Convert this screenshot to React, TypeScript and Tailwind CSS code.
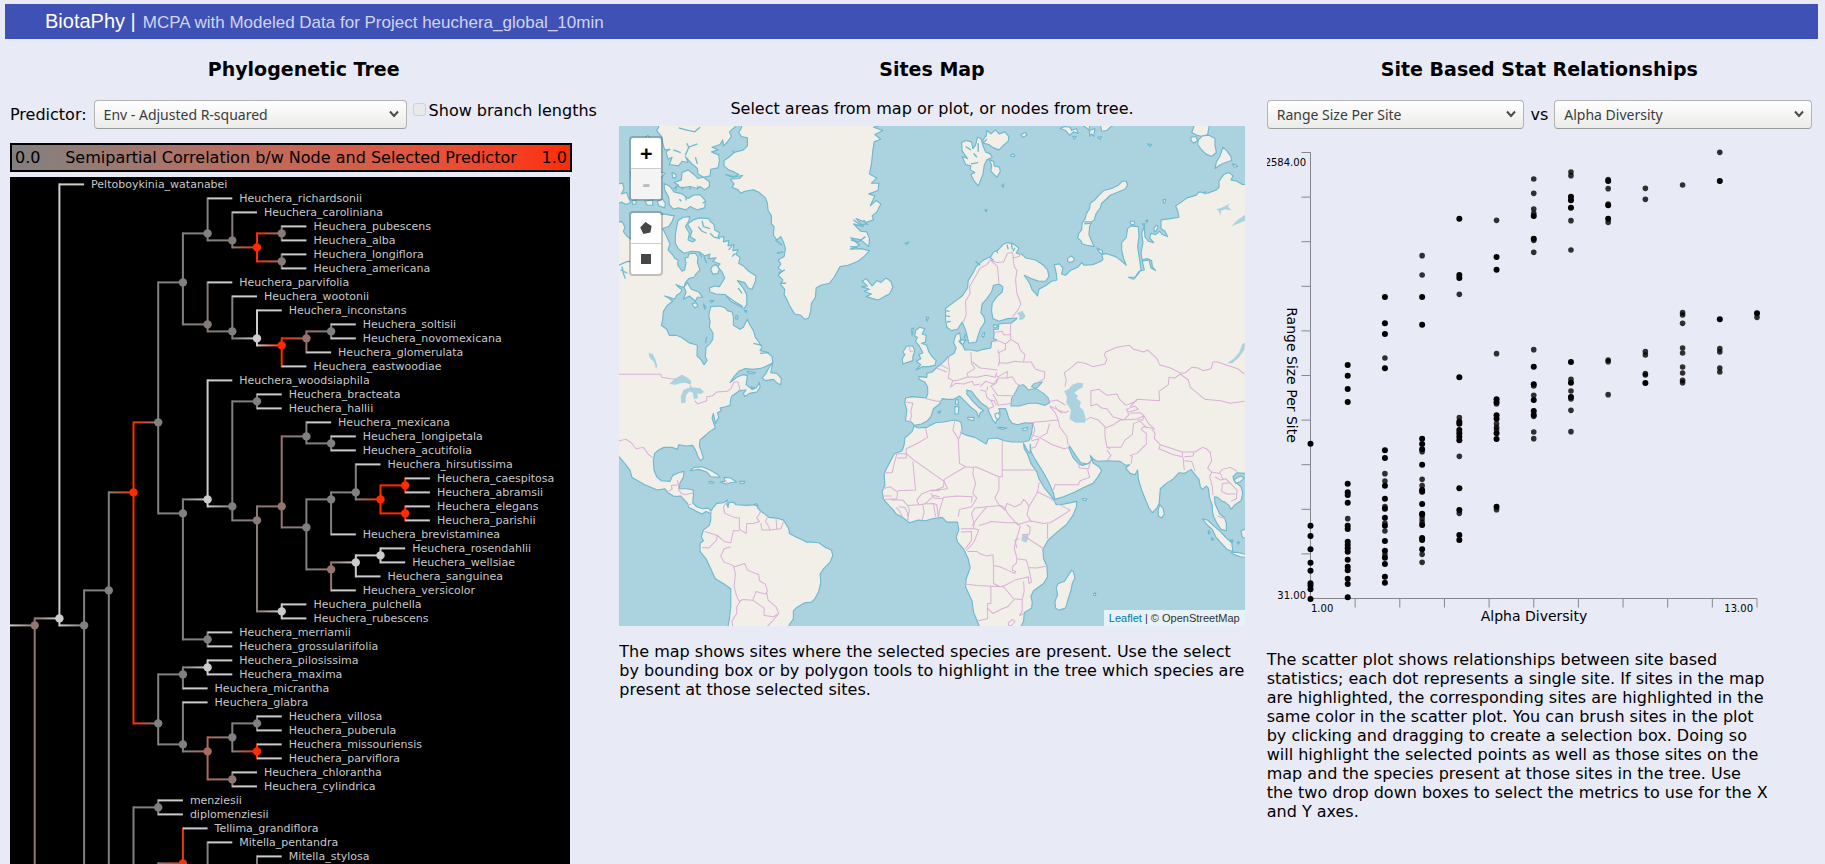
import React from "react";

/* ------------------------------------------------------------------ */
/* Phylogenetic tree                                                   */
/* ------------------------------------------------------------------ */

type Clade = { name?: string; color: string; kids: Clade[] };

const GRAY = "#808080";
const PALE = "#cccccc";
const RED = "#ff2b00";

const sp = (name: string): Clade => ({ name, color: PALE, kids: [] });
const h = (epithet: string): Clade => sp("Heuchera_" + epithet);
const n = (color: string, ...kids: Clade[]): Clade => ({ color, kids });
const tip: Clade = { color: PALE, kids: [] };

const cladeA = n(
  GRAY,
  n(
    GRAY,
    h("richardsonii"),
    n(
      "#857c7a",
      h("caroliniana"),
      n(RED, n("#857b79", h("pubescens"), h("alba")), n("#857b79", h("longiflora"), h("americana"))),
    ),
  ),
  n(
    "#857977",
    h("parvifolia"),
    n(
      GRAY,
      h("wootonii"),
      n(
        PALE,
        h("inconstans"),
        n(RED, n("#9a706a", n(GRAY, h("soltisii"), h("novomexicana")), h("glomerulata")), h("eastwoodiae")),
      ),
    ),
  ),
);

const cladeB = n(
  GRAY,
  n(
    PALE,
    h("woodsiaphila"),
    n(
      GRAY,
      n(GRAY, h("bracteata"), h("hallii")),
      n(
        "#8a7a77",
        n(
          "#967570",
          n(GRAY, h("mexicana"), n(GRAY, h("longipetala"), h("acutifolia"))),
          n(
            GRAY,
            n(
              GRAY,
              n(
                GRAY,
                h("hirsutissima"),
                n(RED, n(RED, h("caespitosa"), h("abramsii")), n(RED, h("elegans"), h("parishii"))),
              ),
              h("brevistaminea"),
            ),
            n("#94756f", n(PALE, n(PALE, h("rosendahlii"), h("wellsiae")), h("sanguinea")), h("versicolor")),
          ),
        ),
        n(PALE, h("pulchella"), h("rubescens")),
      ),
    ),
  ),
  n(GRAY, h("merriamii"), h("grossulariifolia")),
);

const cladeC = n(
  GRAY,
  n(GRAY, n(PALE, h("pilosissima"), h("maxima")), h("micrantha")),
  n(
    GRAY,
    h("glabra"),
    n(
      "#aa6a5e",
      n(GRAY, n(GRAY, h("villosa"), h("puberula")), n(RED, h("missouriensis"), h("parviflora"))),
      n("#8f7873", h("chlorantha"), h("cylindrica")),
    ),
  ),
);

const cladeD = n(
  GRAY,
  n(GRAY, sp("menziesii"), sp("diplomenziesii")),
  n(
    "#8a7a77",
    n(
      "#e6391a",
      sp("Tellima_grandiflora"),
      n(GRAY, sp("Mitella_pentandra"), n(GRAY, n("#857977", sp("Mitella_stylosa"), n(GRAY, tip, tip)), tip)),
    ),
    n(GRAY, n(GRAY, tip, tip), n(GRAY, n(GRAY, tip, tip), n(GRAY, tip, tip))),
  ),
);

const cladeE = n(GRAY, n(GRAY, tip, tip), n(GRAY, tip, n(GRAY, tip, tip)));

const root = n(
  "#8f7773",
  n(PALE, sp("Peltoboykinia_watanabei"), n(GRAY, n(GRAY, n(RED, n(GRAY, cladeA, cladeB), cladeC), cladeD), cladeE)),
  tip,
);

const STEP_X = 24.7;
const ROW = 14;
const TOP = 7.4;

type Placed = { clade: Clade; x: number; first: number; last: number; kids: Placed[] };

function place(clade: Clade, depth: number, counter: { row: number }): Placed {
  const x = depth * STEP_X;
  if (clade.kids.length === 0) {
    const row = counter.row++;
    return { clade, x, first: row, last: row, kids: [] };
  }
  const kids = clade.kids.map((kid) => place(kid, depth + 1, counter));
  return { clade, x, first: kids[0].first, last: kids[kids.length - 1].last, kids };
}

const yOf = (p: Placed) => TOP + ((p.first + p.last) / 2) * ROW;
const gradId = (a: string, b: string) => "edge-" + a.slice(1) + "-" + b.slice(1);

function PhyloTree() {
  const placed = place(root, 1, { row: 0 });
  const pairs = new Map<string, [string, string]>();
  const edges: React.ReactNode[] = [];
  const nodes: React.ReactNode[] = [];
  const labels: React.ReactNode[] = [];

  const fillFor = (a: string, b: string) => {
    if (a === b) return a;
    pairs.set(gradId(a, b), [a, b]);
    return `url(#${gradId(a, b)})`;
  };

  const walk = (p: Placed, key: string) => {
    const y = yOf(p);
    if (p.kids.length === 0) {
      if (p.clade.name) {
        labels.push(
          <text key={key} x={p.x + 7} y={y + 3.6}>
            {p.clade.name}
          </text>,
        );
      }
      return;
    }
    p.kids.forEach((kid, i) => {
      const ky = yOf(kid);
      const k = key + i;
      const fill = kid.kids.length ? fillFor(p.clade.color, kid.clade.color) : PALE;
      edges.push(
        <rect key={k + "v"} x={p.x - 1} y={Math.min(y, ky) - 1} width={2} height={Math.abs(ky - y) + 2} fill={p.clade.color} />,
        <rect key={k + "h"} x={p.x} y={ky - 1} width={STEP_X} height={2} fill={fill} />,
      );
      walk(kid, k);
    });
    nodes.push(<circle key={key} cx={p.x} cy={y} r={4.2} fill={p.clade.color} />);
  };

  edges.push(
    <rect key="stem" x={0} y={yOf(placed) - 1} width={STEP_X} height={2} fill={fillFor(PALE, placed.clade.color)} />,
  );
  walk(placed, "n");

  return (
    <svg width="560" height="904" role="img" aria-label="Phylogenetic tree" className="block">
      <defs>
        {[...pairs].map(([id, [a, b]]) => (
          <linearGradient key={id} id={id}>
            <stop offset="0" stopColor={a} />
            <stop offset="1" stopColor={b} />
          </linearGradient>
        ))}
      </defs>
      {edges}
      {nodes}
      <g fill="#c8c8c8" className="text-[11px]">
        {labels}
      </g>
    </svg>
  );
}

/* ------------------------------------------------------------------ */
/* World map, drawn in thirds of a pixel                               */
/* ------------------------------------------------------------------ */

const AMERICAS =
  "M10,548 36,545 45,562 40,575 52,590 66,600 80,585 90,560 120,530 160,522 193,528 186,545 176,560 158,566 170,590 180,612 174,630 188,645 194,655 204,660 203,675 216,694 224,690 228,668 224,655 234,652 236,642 256,640 264,652 262,668 270,690 258,702 252,712 236,716 226,728 222,742 212,740 198,734 208,744 216,748 212,758 200,766 194,778 178,772 164,768 176,774 188,784 170,798 160,815 158,838 154,856 170,868 178,886 198,886 214,892 236,908 262,916 261,948 272,958 282,974 291,962 286,950 288,922 300,910 308,898 309,880 298,862 300,845 296,826 302,800 330,798 346,804 352,812 366,816 370,830 370,856 390,868 400,862 408,845 412,838 418,852 430,872 436,892 446,906 456,922 450,932 470,936 486,950 488,968 470,978 456,984 430,988 404,986 386,994 372,1010 360,1028 380,1012 398,1004 412,1006 410,1022 408,1034 426,1048 438,1044 448,1028 450,1042 440,1056 418,1060 404,1070 400,1060 408,1050 388,1052 366,1068 362,1076 360,1096 346,1100 330,1104 334,1112 322,1118 326,1132 316,1150 310,1120 306,1135 316,1164 300,1174 284,1188 270,1200 268,1218 276,1240 280,1254 272,1262 264,1250 258,1234 248,1216 230,1218 206,1214 202,1228 186,1222 162,1222 146,1230 134,1240 130,1262 132,1290 140,1310 154,1322 180,1324 188,1306 206,1298 222,1294 220,1312 210,1328 208,1346 230,1346 250,1350 250,1368 248,1388 260,1400 278,1406 294,1404 304,1412 308,1404 320,1390 340,1388 352,1380 350,1392 354,1402 356,1388 370,1386 378,1394 410,1396 440,1394 442,1402 450,1412 462,1420 476,1432 500,1434 520,1440 528,1452 536,1466 538,1480 556,1490 582,1502 588,1506 604,1506 626,1508 646,1522 664,1530 668,1546 660,1566 640,1586 630,1602 632,1626 626,1654 614,1676 604,1686 584,1688 560,1702 550,1712 550,1736 540,1750 530,1770 352,1770 358,1736 362,1700 362,1646 340,1630 316,1616 302,1586 288,1556 270,1534 270,1510 280,1502 274,1490 280,1470 298,1456 302,1440 302,1420 288,1414 276,1422 260,1414 250,1408 236,1402 232,1390 214,1370 190,1368 174,1358 164,1346 142,1350 104,1334 66,1312 60,1290 44,1270 27,1250 10,1240Z";

const OLD_WORLD =
  "M1920,1300 1902,1300 1880,1298 1868,1310 1872,1324 1892,1340 1897,1360 1892,1382 1874,1394 1862,1408 1856,1396 1844,1386 1836,1384 1822,1372 1812,1370 1814,1390 1820,1404 1828,1422 1842,1432 1848,1450 1848,1472 1832,1468 1820,1450 1810,1430 1806,1414 1806,1396 1798,1374 1794,1344 1788,1338 1776,1348 1770,1340 1766,1318 1748,1296 1742,1288 1722,1300 1706,1298 1690,1316 1668,1330 1650,1346 1648,1372 1646,1392 1640,1404 1626,1418 1616,1404 1606,1380 1594,1350 1584,1316 1582,1290 1574,1304 1560,1300 1546,1284 1558,1274 1546,1276 1530,1264 1490,1262 1462,1264 1448,1256 1440,1246 1444,1260 1432,1272 1412,1268 1396,1246 1378,1218 1376,1224 1388,1252 1404,1270 1416,1276 1436,1270 1446,1256 1448,1268 1466,1280 1474,1292 1462,1312 1448,1330 1420,1342 1394,1356 1360,1370 1334,1378 1330,1360 1316,1328 1302,1302 1286,1276 1270,1250 1262,1234 1260,1212 1260,1238 1254,1236 1240,1210 1242,1226 1252,1242 1262,1270 1280,1296 1286,1316 1304,1346 1318,1362 1330,1378 1338,1394 1360,1392 1400,1384 1398,1402 1388,1426 1368,1454 1336,1480 1312,1502 1298,1528 1300,1556 1310,1578 1312,1610 1300,1630 1270,1652 1262,1668 1266,1686 1264,1704 1242,1718 1240,1744 1226,1770 1112,1770 1100,1740 1090,1716 1086,1684 1066,1640 1068,1616 1080,1584 1074,1556 1060,1526 1042,1506 1038,1490 1046,1470 1042,1446 1010,1446 996,1432 966,1436 946,1442 924,1440 898,1448 880,1434 858,1422 850,1410 838,1398 820,1378 816,1354 824,1336 822,1300 830,1284 852,1242 876,1232 882,1214 884,1194 906,1174 912,1158 924,1164 950,1162 976,1148 1000,1146 1034,1140 1052,1146 1056,1168 1052,1178 1070,1186 1094,1192 1128,1212 1134,1196 1160,1194 1182,1202 1206,1206 1236,1206 1256,1202 1264,1180 1268,1150 1244,1148 1222,1154 1206,1150 1196,1136 1190,1116 1186,1106 1166,1106 1170,1122 1162,1136 1156,1150 1148,1140 1138,1120 1132,1102 1112,1088 1096,1070 1084,1054 1070,1050 1070,1062 1088,1084 1104,1100 1120,1112 1110,1118 1106,1132 1098,1114 1080,1100 1062,1082 1048,1068 1030,1078 1012,1078 996,1076 988,1092 970,1106 962,1130 952,1142 934,1152 912,1156 904,1146 886,1142 890,1110 884,1090 886,1074 906,1070 948,1074 953,1060 952,1040 944,1026 926,1018 926,1010 950,1012 950,1000 966,996 980,982 986,978 1004,962 1014,950 1032,940 1038,924 1030,908 1036,886 1048,878 1052,898 1046,904 1058,916 1064,930 1084,930 1100,934 1120,928 1142,924 1144,906 1160,900 1150,896 1152,880 1150,868 1164,868 1166,852 1186,850 1202,850 1218,838 1220,834 1192,836 1166,844 1148,836 1144,812 1146,790 1160,770 1176,756 1178,740 1166,732 1150,736 1144,756 1130,776 1116,792 1112,818 1122,832 1124,846 1110,868 1104,886 1098,906 1076,910 1072,894 1066,870 1056,846 1042,868 1024,872 1010,862 1006,838 1006,806 1018,796 1046,776 1058,766 1072,744 1074,722 1088,700 1098,680 1120,660 1142,650 1150,636 1164,630 1178,614 1192,608 1210,612 1226,624 1218,640 1236,644 1246,654 1276,660 1300,676 1312,690 1316,710 1306,724 1286,724 1262,716 1242,706 1258,730 1266,750 1282,768 1286,748 1304,738 1324,724 1340,720 1338,700 1332,674 1348,672 1358,684 1354,702 1366,706 1380,692 1402,682 1414,668 1422,676 1448,674 1472,664 1478,658 1474,642 1492,642 1516,650 1532,662 1548,676 1540,656 1534,630 1534,608 1548,592 1552,566 1562,558 1584,560 1586,590 1582,620 1588,660 1592,690 1582,704 1570,718 1554,712 1574,712 1586,694 1602,690 1596,664 1616,660 1622,684 1636,692 1626,680 1624,662 1610,656 1596,660 1592,640 1598,608 1594,580 1602,560 1604,590 1614,604 1630,608 1618,594 1622,580 1636,584 1648,574 1656,584 1672,590 1664,574 1652,566 1652,540 1680,536 1706,532 1702,512 1696,498 1714,486 1730,474 1758,466 1766,456 1792,460 1818,450 1826,442 1826,424 1840,404 1856,398 1868,408 1862,420 1880,424 1896,434 1920,434Z";

const ISLANDS = [
  // Greenland
  "M402,240 392,268 386,278 394,290 412,294 412,318 400,330 372,338 356,352 342,362 342,378 356,390 372,396 386,404 372,410 346,404 368,412 398,406 388,416 360,418 372,432 366,442 384,450 392,460 404,454 430,450 448,458 466,474 472,490 474,512 484,528 484,552 492,560 490,586 500,600 512,590 520,606 526,626 522,650 504,660 512,672 504,684 516,694 504,706 518,720 512,734 524,748 522,764 530,778 540,800 554,822 572,826 584,838 596,834 602,812 604,790 616,772 618,744 632,736 658,730 672,712 690,680 714,676 744,664 764,648 778,632 752,626 720,628 748,616 722,594 752,600 776,620 778,596 770,576 752,574 730,552 760,560 738,536 766,548 790,540 786,528 800,516 812,492 798,482 780,498 794,468 776,462 804,452 806,430 784,430 800,414 778,402 784,372 788,334 792,306 812,298 794,284 818,272 790,262 834,250 836,240Z",
  // Ellesmere
  "M142,240 146,262 140,272 156,292 158,310 164,330 180,328 168,336 174,358 186,352 178,374 206,378 216,364 234,368 226,350 246,372 262,386 264,402 280,412 300,408 302,388 324,384 328,362 326,345 304,336 324,330 306,322 330,314 338,300 340,318 352,306 364,290 358,276 374,262 388,240Z",
  // Devon and neighbours
  "M190,446 206,436 192,428 214,420 216,398 234,390 252,404 264,416 280,412 298,426 298,440 284,450 270,440 262,446 240,440 214,444 204,438Z",
  "M162,430 180,440 192,456 216,462 234,476 250,466 270,464 286,482 284,504 262,510 240,500 228,510 204,504 190,508 178,494 176,472 164,450Z",
  "M186,398 198,404 198,414 188,414Z",
  "M104,484 128,480 128,496 112,496Z",
  "M142,484 158,478 166,490 164,504 146,498Z",
  "M20,432 38,430 42,446 34,462 50,458 54,470 62,488 48,494 34,486 20,496Z",
  "M66,484 78,480 78,492 68,494Z",
  "M62,396 76,392 110,400 150,396 166,400 150,416 130,470 90,468 64,420Z",
  "M108,292 114,286 120,296 112,304Z",
  // Baffin
  "M200,560 204,542 220,532 240,530 236,544 226,560 238,580 234,600 248,606 256,600 240,590 246,574 232,552 250,540 268,534 296,536 302,546 312,554 314,570 328,578 324,592 342,590 340,606 356,602 354,618 372,614 368,632 384,630 378,644 390,652 386,670 402,680 416,694 438,708 436,724 426,748 414,744 404,728 382,722 398,742 410,764 410,794 402,806 384,796 362,784 346,764 318,762 300,756 298,744 314,738 328,740 344,714 336,696 322,680 330,672 308,664 318,654 296,656 300,642 284,648 268,636 244,634 222,640 206,628 196,610 196,586Z",
  "M306,680 318,674 328,688 322,702 308,702 302,690Z",
  "M232,728 244,748 266,756 278,772 262,772 256,784 238,768 220,778 228,756 222,742Z",
  "M246,792 258,788 264,798 254,804Z",
  "M280,792 288,802 284,808Z",
  "M300,782 312,782 304,788Z",
  "M402,812 410,812 408,818Z",
  // Newfoundland
  "M488,968 476,984 468,1000 456,1014 466,1022 490,1018 502,1030 512,1034 514,1016 500,1000 482,998Z",
  "M412,994 436,998 430,1002 416,1000Z",
  "M424,1040 434,1044 426,1048Z",
  // Caribbean
  "M240,1292 252,1282 276,1280 300,1290 324,1304 330,1312 302,1310 290,1296 266,1288Z",
  "M330,1326 344,1324 342,1312 362,1314 380,1326 362,1328 348,1332Z",
  "M296,1326 304,1324 312,1328 302,1330Z",
  "M388,1324 404,1324 402,1330 390,1330Z",
  "M432,1394 440,1390 444,1398Z",
  // Iceland
  "M754,740 772,738 756,724 768,716 778,728 786,738 800,722 812,728 828,714 842,724 848,742 838,762 822,770 804,780 788,776 768,770 784,762 762,754 778,748Z",
  "M884,610 896,606 890,614Z",
  "M948,832 956,832 950,844Z",
  // Britain and Ireland
  "M916,872 928,862 944,866 936,882 948,886 946,906 934,910 950,916 956,936 966,950 978,962 974,976 956,980 936,980 918,990 932,974 918,964 932,956 926,944 938,938 926,916 916,904 922,892 914,890Z",
  "M904,868 910,864 908,878 906,888Z",
  "M890,918 908,918 914,932 908,950 908,962 890,968 878,972 876,956 884,944 878,936Z",
  // Svalbard
  "M1054,308 1068,302 1084,306 1088,326 1096,316 1102,292 1112,296 1118,316 1126,336 1140,342 1146,352 1130,360 1122,376 1118,404 1110,424 1104,438 1092,424 1082,404 1094,398 1080,390 1082,378 1066,374 1056,350 1072,356 1056,334Z",
  "M1118,300 1128,288 1130,272 1142,282 1156,270 1166,282 1184,276 1196,290 1194,304 1176,320 1166,330 1150,324 1136,314 1120,310Z",
  "M1138,360 1150,364 1152,378 1168,382 1170,396 1160,412 1152,404 1142,394 1144,376Z",
  "M1232,284 1246,278 1250,286 1238,292Z",
  "M1200,346 1210,342 1214,350 1204,350Z",
  "M1174,438 1180,432 1180,442Z",
  "M1124,510 1130,510 1128,516Z",
  // Franz Josef Land
  "M1350,266 1362,260 1380,262 1384,272 1398,266 1404,280 1390,276 1378,286 1366,272Z",
  "M1410,252 1440,252 1436,270 1426,262Z",
  "M1438,272 1454,266 1450,290 1444,282 1438,290Z",
  "M1470,252 1516,252 1500,262 1490,272 1474,274Z",
  "M1388,290 1398,290 1392,298Z",
  "M1462,292 1474,290 1470,298Z",
  "M1612,312 1624,314 1620,320Z",
  // Novaya Zemlya
  "M1536,424 1548,424 1552,436 1544,448 1520,458 1500,466 1488,478 1474,490 1470,504 1458,520 1452,540 1444,546 1438,560 1436,584 1444,604 1452,620 1430,616 1416,612 1412,602 1402,594 1406,580 1414,570 1416,548 1424,538 1428,522 1438,506 1440,490 1454,480 1464,468 1480,452 1504,446 1524,436Z",
  "M1424,546 1442,546 1442,550 1424,552Z",
  // Arctic Russian islands
  "M1756,240 1750,262 1744,278 1760,286 1776,290 1792,284 1796,262 1794,240Z",
  "M1742,292 1756,290 1762,302 1750,310 1742,302Z",
  "M1764,300 1776,288 1796,286 1814,296 1814,316 1818,338 1804,350 1786,342 1772,328 1762,314Z",
  "M1838,322 1850,334 1862,350 1864,362 1846,368 1832,374 1814,386 1818,366 1828,350Z",
  "M1866,372 1874,374 1882,380 1872,382Z",
  "M1778,458 1786,456 1784,462Z",
  "M1372,656 1382,648 1392,654 1390,664 1378,668 1372,664Z",
  "M1460,624 1476,632 1478,644 1468,638Z",
  "M1560,544 1572,544 1572,556 1560,552Z",
  "M1606,542 1612,540 1610,548Z",
  "M1596,552 1604,552 1602,560Z",
  "M1630,566 1638,556 1644,560 1638,572 1634,576Z",
  "M1658,480 1666,478 1664,490 1660,490Z",
  // Danish and Baltic islands
  "M1054,898 1064,904 1058,914 1050,906Z",
  "M1118,880 1124,878 1120,892 1114,888Z",
  "M1150,854 1162,856 1158,864 1150,862Z",
  // Mediterranean
  "M1072,1132 1092,1132 1090,1142 1074,1138Z",
  "M1034,1100 1046,1100 1044,1122 1034,1122Z",
  "M1036,1080 1044,1078 1044,1094 1036,1092Z",
  "M982,1116 992,1112 988,1120Z",
  "M1162,1162 1176,1162 1190,1164 1176,1168Z",
  "M1236,1166 1252,1162 1250,1170 1240,1172Z",
  "M1154,1122 1164,1118 1170,1128 1164,1140 1156,1132Z",
  // Madagascar and Indian Ocean
  "M1384,1590 1390,1596 1394,1614 1386,1630 1382,1652 1374,1676 1366,1704 1346,1710 1336,1704 1334,1684 1342,1664 1338,1642 1344,1630 1362,1624 1374,1606Z",
  "M1416,1376 1430,1376 1426,1382 1418,1380Z",
  "M1450,1660 1456,1658 1456,1666 1450,1666Z",
  "M1648,1394 1658,1404 1662,1422 1654,1434 1644,1428 1644,1408Z",
  "M1776,1436 1792,1440 1808,1456 1830,1474 1846,1492 1864,1508 1868,1534 1850,1528 1832,1508 1816,1490 1806,1468 1790,1454Z",
  "M1862,1538 1880,1536 1910,1544 1910,1552 1890,1550 1868,1542Z",
  "M1892,1472 1910,1466 1910,1496 1896,1492Z",
  "M1872,1318 1890,1308 1902,1314 1888,1326 1876,1330Z",
  "M1794,1472 1800,1478 1794,1482Z",
  "M1804,1492 1810,1498 1804,1500Z",
  "M1860,1500 1868,1500 1866,1508Z",
  "M1880,1506 1888,1506 1884,1512Z",
];

const SEAS = [
  // Black Sea with Azov
  "M1202,1098 1204,1076 1216,1056 1226,1036 1240,1034 1248,1042 1254,1050 1262,1048 1278,1046 1300,1060 1314,1074 1318,1088 1304,1096 1280,1090 1256,1090 1228,1098Z",
  "M1264,1040 1272,1030 1296,1026 1284,1040 1276,1046Z",
  "M378,826 384,828 382,838 376,836Z",
];

const LAKES = [
  "M1362,1054 1376,1046 1386,1034 1402,1028 1418,1030 1418,1042 1406,1048 1392,1058 1404,1068 1398,1074 1412,1086 1408,1100 1420,1112 1426,1134 1424,1148 1396,1148 1378,1138 1382,1110 1368,1088 1370,1072Z",
  "M178,1032 194,1016 216,1004 234,1014 244,1024 242,1034 226,1028 210,1030 196,1034Z",
  "M214,1090 212,1070 220,1050 240,1042 270,1044 282,1056 272,1062 262,1060 264,1074 252,1078 248,1058 238,1054 228,1066 226,1088Z",
  "M116,938 128,942 136,958 142,978 138,986 132,966 118,952Z",
  "M1220,820 1236,812 1246,828 1240,838 1226,840 1228,828Z",
  "M1234,1490 1254,1482 1254,1494 1248,1508 1234,1502Z",
  "M1896,912 1904,908 1902,930 1884,954 1866,970 1850,970 1868,958 1886,938Z",
  "M1818,508 1832,504 1842,500 1860,490 1852,500 1864,512 1846,508 1832,512 1830,530 1826,514Z",
  "M1864,558 1880,542 1910,520 1910,540 1886,550Z",
];

const FJORDS =
  "M190,330 212,338 M226,346 236,322 262,312 M270,262 254,276 228,270 206,264 M238,326 230,310 M256,352 262,372 M198,440 198,452 M216,440 218,450 M240,440 240,450 M262,438 264,448 M228,470 228,482 M208,478 214,484 M286,484 278,490 M265,560 276,574 290,580 M276,542 280,560 300,566 M300,580 312,592 330,596 M366,618 356,630 M376,640 366,650 M384,744 396,760 M350,768 372,784 398,800 M496,600 516,616 M500,640 520,636 M506,700 524,690 M510,730 528,730 M730,540 752,556 768,552 M722,600 744,606 766,590 M720,620 742,622 M760,540 774,556 M368,332 372,340 M282,650 290,670 M268,640 276,652 M430,910 456,916 M450,940 476,938 M32,690 52,700 M27,676 48,666 60,664 M36,680 40,700 46,716 M1066,320 1082,330 M1104,310 1104,336 M1082,372 1104,368 M1090,340 1100,352 M1120,308 1130,298 M1190,614 1194,628 M1204,612 1206,628 M1214,624 1208,634 M1160,632 1162,640 M1138,652 1150,662 M1096,664 1110,676 M1008,812 1018,814 M1008,828 1020,830 M1010,846 1022,844 M1070,880 1062,890 1068,904 M286,910 290,890";

const BORDERS =
  "M27,1003 152,1003 156,1012 182,1016 200,1018 M240,1036 246,1046 M254,1082 262,1092 290,1082 290,1070 306,1068 320,1056 352,1054 362,1046 372,1026 384,1026 390,1050 M27,1202 48,1198 64,1208 78,1226 100,1222 116,1244 132,1256 M176,1354 186,1348 184,1336 206,1334 202,1320 M206,1334 206,1350 214,1360 226,1364 250,1358 M214,1366 204,1368 M230,1396 244,1392 M298,1412 306,1420 M352,1384 340,1400 344,1420 372,1432 388,1434 388,1468 408,1480 410,1450 430,1450 448,1444 440,1434 452,1414 M472,1432 466,1444 474,1456 480,1470 512,1466 520,1446 M498,1436 500,1466 M452,1450 456,1470 480,1470 M284,1474 308,1482 322,1486 342,1504 362,1508 370,1472 388,1472 M322,1486 318,1502 296,1524 276,1522 M362,1520 342,1526 332,1548 342,1566 360,1572 374,1580 404,1570 412,1590 446,1604 448,1622 466,1632 472,1652 466,1662 438,1654 428,1680 398,1678 388,1684 380,1668 372,1640 376,1600 370,1578 M428,1680 462,1704 462,1726 490,1730 506,1720 498,1700 474,1680 470,1658 M390,1684 380,1700 380,1720 366,1742 368,1770 M504,1722 486,1744 472,1758 M346,1320 352,1332 " +
  "M888,1086 908,1090 902,1114 904,1128 898,1146 M948,1076 980,1084 996,1084 M898,920 900,934 910,934 " +
  "M1060,846 1068,824 1066,784 1080,760 1078,740 1100,702 1110,684 1130,674 1140,660 1162,680 1166,728 M1140,660 1160,668 1180,666 1192,640 1206,638 1210,654 1226,650 1232,642 M1208,652 1212,680 1220,692 1216,720 1220,760 1232,792 1222,812 1206,832 M1202,850 1200,874 1202,898 1224,912 1230,930 1244,944 1240,966 1264,966 1266,974 M1148,878 1176,874 1180,884 1200,884 M1146,904 1164,902 1186,912 1202,898 M1186,912 1186,928 1166,938 1168,966 1164,978 M1164,930 1164,940 M1164,968 1192,970 1212,964 1240,966 M1082,936 1084,970 1094,986 M1020,940 1014,960 1018,992 1014,1014 1028,1022 1020,1042 M978,984 1010,996 M990,974 1014,986 M1086,966 1110,984 1130,986 1162,990 M1094,986 1070,1000 1074,1010 1046,1020 1028,1022 M1074,1010 1100,1012 1128,1006 1156,1012 1160,996 M1020,1042 1036,1030 1060,1032 1086,1024 1092,1036 1110,1032 M1110,1040 1126,1024 1150,1032 1164,1014 1190,1014 1206,1010 M1164,1014 1158,1030 1142,1038 1152,1052 1162,1066 1220,1068 M1206,1010 1218,1030 1230,1038 M1110,1050 1126,1054 1130,1072 1144,1084 1150,1100 1134,1106 M1130,1052 1132,1040 M1148,1062 1160,1084 1164,1096 1192,1092 1206,1088 M1140,1080 1152,1082 1158,1096 M1154,1006 1164,1010 1192,994 1190,1014 M1266,972 1276,988 1304,996 1302,1016 1282,1028 " +
  "M1364,1040 1368,1022 1362,998 1384,982 1402,966 1424,970 1448,980 1484,972 1490,958 1482,946 1486,936 1520,922 1558,916 1570,928 1600,936 1612,930 1640,956 1648,974 1680,984 1712,1000 1726,998 1744,982 1764,984 1778,992 1802,986 1808,966 1822,966 1850,976 1882,986 1902,1002 M1710,1002 1694,1014 1676,1012 1674,1034 1646,1054 1648,1082 1580,1078 1560,1100 M1710,1002 1734,1020 1740,1042 1784,1078 1830,1082 1860,1090 1902,1084 M1442,1098 1442,1052 1466,1048 1490,1066 1520,1062 1528,1078 1548,1096 1580,1082 M1442,1098 1460,1092 1474,1104 1490,1106 1508,1130 1540,1140 1556,1124 1548,1106 M1548,1108 1574,1098 1584,1108 1564,1114 1552,1116 M1560,1120 1590,1118 1600,1126 1598,1140 1580,1140 M1424,1142 1440,1132 1464,1140 1484,1160 1484,1190 1490,1222 1500,1226 M1484,1164 1510,1154 1530,1140 1576,1138 1600,1128 M1490,1222 1532,1222 1544,1200 1566,1184 1570,1150 1590,1144 1610,1164 M1490,1230 1502,1246 1490,1262 M1562,1272 1566,1250 1560,1246 1580,1240 1608,1212 1608,1180 1592,1168 1600,1160 1624,1164 1634,1180 1632,1196 1650,1214 1716,1236 1716,1250 1690,1244 1646,1226 1650,1214 M1600,1126 1614,1150 1634,1168 M1716,1236 1754,1236 1776,1222 1788,1226 1800,1238 1804,1262 1792,1284 1804,1296 1826,1300 1836,1288 1860,1282 1880,1294 M1722,1250 1748,1248 1750,1238 M1718,1252 1722,1290 M1722,1262 1744,1264 1750,1280 1754,1294 M1804,1296 1798,1310 1806,1340 1808,1366 M1814,1310 1830,1320 1846,1316 1858,1328 1836,1330 1834,1354 1850,1362 1876,1362 M1858,1328 1880,1350 1878,1376 1862,1384 M1830,1300 1838,1318 M1822,1428 1844,1436 " +
  "M1258,1148 1280,1146 1344,1140 1336,1120 1318,1098 M1344,1140 1348,1160 1370,1190 1374,1216 M1318,1098 1340,1108 1364,1118 1376,1112 M1302,1076 1324,1084 1340,1080 1360,1092 1366,1096 M1334,1098 1342,1110 1356,1120 M1318,1150 1310,1180 1288,1192 1270,1186 M1288,1192 1326,1214 1362,1226 1376,1222 M1264,1202 1286,1196 1276,1220 1260,1226 M1268,1150 1274,1170 1262,1200 M1404,1268 1408,1284 1434,1286 1442,1264 M1432,1288 1438,1312 1410,1322 1404,1334 1360,1334 1334,1334 1330,1350 " +
  "M946,1164 952,1192 918,1212 888,1226 888,1240 860,1242 850,1280 846,1298 822,1298 M862,1254 888,1254 888,1240 908,1258 1002,1324 1012,1346 964,1352 M908,1264 916,1350 862,1352 M818,1346 840,1340 862,1356 860,1376 820,1378 M820,1368 844,1368 M844,1380 878,1380 892,1396 926,1394 920,1380 934,1362 964,1350 988,1352 M858,1402 866,1410 878,1432 M866,1400 884,1402 892,1418 894,1440 M892,1396 898,1410 892,1440 M938,1394 942,1416 936,1440 M938,1392 970,1390 976,1430 M970,1390 980,1394 984,1432 M926,1394 944,1392 972,1366 988,1370 " +
  "M1034,1142 1028,1170 1044,1196 1048,1270 1066,1280 1090,1282 1088,1302 1096,1330 1088,1360 1100,1374 1084,1400 1048,1408 1044,1430 M1066,1280 1002,1318 1000,1340 968,1354 M1056,1170 1046,1196 M1176,1202 1176,1310 1166,1310 1166,1350 1154,1374 1168,1396 M1176,1290 1280,1290 M1166,1310 1096,1280 1090,1282 M998,1372 1040,1368 1086,1370 1084,1386 M1000,1372 988,1410 986,1430 M962,1360 972,1374 1000,1376 M1052,1466 1090,1466 1092,1452 1084,1420 1094,1404 1130,1400 1170,1396 1180,1400 1194,1422 1222,1454 1260,1442 1300,1450 1320,1448 1350,1430 1380,1410 1340,1390 1320,1374 1282,1356 1286,1330 1302,1322 M1168,1396 1184,1410 1190,1390 1214,1400 1232,1392 1240,1378 1250,1388 1256,1400 1282,1356 M1256,1400 1250,1424 1264,1446 M1312,1496 1312,1452 M1250,1454 1260,1462 1258,1482 1236,1484 1300,1526 M1130,1400 1104,1430 1086,1456 M1052,1476 1084,1474 1084,1500 1066,1526 M1092,1466 1106,1470 1090,1508 1068,1532 M1106,1456 1128,1450 1142,1444 1192,1448 1220,1448 1230,1460 1218,1500 1212,1524 1220,1554 1218,1570 1208,1578 1206,1590 1216,1594 1214,1600 1192,1590 1168,1580 1150,1576 1148,1544 1130,1548 1108,1540 1100,1534 1072,1534 M1220,1524 1214,1500 1226,1496 M1220,1556 1248,1560 1256,1586 1264,1626 1256,1630 1254,1610 M1254,1582 1280,1584 1310,1578 M1150,1578 1150,1630 1170,1640 1184,1636 1214,1620 1256,1610 M1064,1632 1100,1636 1180,1640 1210,1676 1236,1678 1242,1652 1240,1624 M1142,1640 1142,1690 1132,1690 1132,1736 1104,1742 M1132,1704 1148,1720 1176,1706 1192,1700 1212,1678 M1236,1678 1236,1712 1228,1726 1242,1720 M1194,1748 1206,1738 1214,1744 1204,1756 1196,1758Z";

function WorldMap() {
  return (
    <svg
      viewBox="27 258 1875 1500"
      preserveAspectRatio="xMidYMid slice"
      className="block h-full w-full"
      role="img"
      aria-label="World map"
    >
      <g fill="#f2efe9" stroke="#6fb8cd" strokeWidth="3.4" strokeLinejoin="round">
        <path d={AMERICAS} />
        <path d={OLD_WORLD} />
        {ISLANDS.map((d) => (
          <path key={d} d={d} />
        ))}
      </g>
      <g fill="#aad3df" stroke="#6fb8cd" strokeWidth="3">
        {SEAS.map((d) => (
          <path key={d} d={d} />
        ))}
      </g>
      <path d={FJORDS} fill="none" stroke="#6fb8cd" strokeWidth="4" />
      <g fill="#aad3df">
        {LAKES.map((d) => (
          <path key={d} d={d} />
        ))}
      </g>
      <path d={BORDERS} fill="none" stroke="#d9b0d6" strokeWidth="3" strokeLinejoin="round" />
    </svg>
  );
}

/* ------------------------------------------------------------------ */
/* Scatter plot                                                        */
/* ------------------------------------------------------------------ */

/* One entry per alpha diversity value; heights in thirds of a pixel. */
const COLUMNS: { dense: number[]; sparse: number[] }[] = [
  { dense: [1331, 1577, 1608, 1648, 1688, 1712, 1750, 1757, 1768, 1797], sparse: [] },
  {
    dense: [1095, 1127, 1167, 1206, 1451, 1477, 1485, 1508, 1577, 1587, 1625, 1635, 1645, 1655, 1679, 1700, 1711, 1736, 1752, 1792],
    sparse: [1556],
  },
  {
    dense: [891, 970, 1002, 1105, 1351, 1374, 1457, 1496, 1526, 1553, 1577, 1623, 1652, 1673, 1692, 1730, 1748],
    sparse: [1074, 1421, 1443, 1520, 1569, 1593, 1664],
  },
  {
    dense: [891, 974, 1316, 1332, 1348, 1394, 1470, 1475, 1512, 1541, 1544, 1575, 1614, 1620, 1648],
    sparse: [767, 825, 1355, 1438, 1457, 1556, 1566, 1663, 1687],
  },
  {
    dense: [656, 825, 834, 1132, 1265, 1271, 1290, 1300, 1310, 1321, 1465, 1530, 1605, 1620],
    sparse: [883, 1253, 1369, 1540],
  },
  {
    dense: [771, 809, 1198, 1207, 1246, 1256, 1300, 1317, 1520],
    sparse: [661, 1061, 1212, 1271, 1282, 1289, 1529],
  },
  {
    dense: [648, 716, 1100, 1153, 1200, 1233, 1245],
    sparse: [537, 580, 627, 640, 721, 757, 1049, 1158, 1186, 1249, 1296, 1316],
  },
  {
    dense: [590, 601, 623, 1086, 1148, 1191],
    sparse: [516, 527, 662, 750, 1138, 1173, 1197, 1231, 1295],
  },
  { dense: [543, 616, 656], sparse: [539, 566, 612, 667, 1080, 1085, 1184] },
  { dense: [1149], sparse: [565, 598, 1055, 1065, 1121, 1125] },
  { dense: [], sparse: [555, 938, 945, 970, 1044, 1059, 1101, 1119, 1141, 1148] },
  { dense: [543, 958], sparse: [457, 1046, 1056, 1104, 1116] },
  { dense: [940], sparse: [952] },
];

const AXIS_X = 43.5;
const AXIS_TOP = 9.5;
const AXIS_BOTTOM = 455.5;
const AXIS_RIGHT = 490;
const COL_STEP = (AXIS_RIGHT - AXIS_X) / 12;

function ScatterPlot() {
  const ticks = [1, 2, 3, 4, 5, 6, 7, 8, 9, 10];
  const tickX = (AXIS_RIGHT - AXIS_X) / 10;
  const tickY = (AXIS_BOTTOM - AXIS_TOP) / 10;
  const dotY = (v: number) => v / 3 - 143;
  return (
    <svg width="545" height="490" role="img" aria-label="Range Size Per Site vs Alpha Diversity" className="block">
      <g stroke="#85878f" strokeWidth="1" fill="none">
        <path d={`M${AXIS_X},${AXIS_TOP}V${AXIS_BOTTOM}H${AXIS_RIGHT}`} />
        {ticks.map((t) => (
          <path key={t} d={`M${AXIS_X + t * tickX},${AXIS_BOTTOM}v9M${AXIS_X},${AXIS_BOTTOM - t * tickY}h-9`} />
        ))}
      </g>
      <g fill="#000000">
        {COLUMNS.map((c, i) => (
          <g key={i}>
            {c.sparse.map((v) => (
              <circle key={v} cx={AXIS_X + i * COL_STEP} cy={dotY(v)} r={2.8} fillOpacity={0.8} />
            ))}
            {c.dense.map((v) => (
              <circle key={v} cx={AXIS_X + i * COL_STEP} cy={dotY(v)} r={3} />
            ))}
          </g>
        ))}
      </g>
      <g fill="#000000" className="text-[10px]">
        <text x="39" y="23" textAnchor="end">2584.00</text>
        <text x="39" y="456" textAnchor="end">31.00</text>
        <text x="44" y="469">1.00</text>
        <text x="486" y="469" textAnchor="end">13.00</text>
      </g>
      <g fill="#000000" className="text-[14px]">
        <text x="267" y="478" textAnchor="middle">Alpha Diversity</text>
        <text transform="translate(20 232) rotate(90)" textAnchor="middle">Range Size Per Site</text>
      </g>
    </svg>
  );
}

/* ------------------------------------------------------------------ */
/* Page                                                                */
/* ------------------------------------------------------------------ */

function Dropdown({ id, label, options, className }: { id: string; label?: string; options: string[]; className: string }) {
  return (
    <span className={"relative block " + className}>
      <select
        id={id}
        aria-label={label}
        className="block h-[29px] w-full appearance-none rounded border border-[#b4b4b2] border-b-[#9a9a98] bg-linear-to-b from-white to-[#ebebea] pr-7 pl-[9px] font-['Noto_Sans',sans-serif] text-[14px] text-[#3c3c3c]"
      >
        {options.map((o) => (
          <option key={o}>{o}</option>
        ))}
      </select>
      <svg viewBox="0 0 10 8" className="pointer-events-none absolute top-[10px] right-2 h-2 w-[10px]" aria-hidden="true">
        <path d="M1,1.5 5,6 9,1.5" fill="none" stroke="#4a4a4a" strokeWidth="2" />
      </svg>
    </span>
  );
}

function Title({ children }: { children: React.ReactNode }) {
  return <h3 className="mt-[19px] mb-5 text-center text-[19px] leading-[22px] font-bold">{children}</h3>;
}

export default function App() {
  return (
    <div className="flex h-screen flex-col overflow-hidden bg-[#e8eaf6] pt-1 font-['DejaVu_Sans',sans-serif] text-[16px] leading-[19px] text-black">
      <header className="mr-[7px] ml-[5px] flex h-[35px] shrink-0 items-center bg-[#3f51b5] pl-10 font-['Liberation_Sans',sans-serif]">
        <h1 className="flex items-baseline gap-[7px] text-[20px] text-white">
          <span>BiotaPhy |</span>
          <span className="text-[17px] text-[#d0d4ee]">MCPA with Modeled Data for Project heuchera_global_10min</span>
        </h1>
      </header>

      <main className="grid min-h-0 flex-1 grid-cols-[587fr_625fr_545fr] gap-x-[22px] pr-[13px] pl-[10px]">
        <section className="flex min-h-0 min-w-0 flex-col">
          <Title>Phylogenetic Tree</Title>
          <div className="flex items-start whitespace-nowrap">
            <label htmlFor="predictor" className="mr-[7px] pt-[5px]">
              Predictor:
            </label>
            <Dropdown id="predictor" options={["Env - Adjusted R-squared"]} className="w-[313px]" />
            <input
              id="branch"
              type="checkbox"
              className="mt-[3px] ml-[6px] size-[13px] appearance-none rounded-[3px] border border-[#d0d0d0] bg-[#e9e9ea]"
            />
            <label htmlFor="branch" className="ml-[3px] pt-px">
              Show branch lengths
            </label>
          </div>
          <div className="mt-[14px] flex h-[29px] w-[562px] shrink-0 items-center justify-between border-2 border-black bg-linear-to-r from-[#808080] to-[#ff2b00] px-[3px]">
            <span>0.0</span>
            <span>Semipartial Correlation b/w Node and Selected Predictor</span>
            <span>1.0</span>
          </div>
          <div className="mt-[5px] min-h-0 w-[560px] flex-1 overflow-hidden bg-black">
            <PhyloTree />
          </div>
        </section>

        <section className="min-w-0">
          <Title>Sites Map</Title>
          <p className="mb-2 text-center leading-[18px]">Select areas from map or plot, or nodes from tree.</p>
          <div className="relative h-[500px] overflow-hidden bg-[#aad3df]">
            <WorldMap />
            <div className="absolute top-[10px] left-[10px] flex flex-col gap-[10px]">
              <div className="w-[34px] overflow-hidden rounded border-2 border-black/20 bg-white bg-clip-padding">
                <button
                  aria-label="Zoom in"
                  className="flex h-[31px] w-full items-center justify-center border-b border-[#cccccc] font-['DejaVu_Sans_Mono',monospace] text-[20px] font-bold"
                >
                  +
                </button>
                <button
                  aria-label="Zoom out"
                  disabled
                  className="flex h-[30px] w-full items-center justify-center bg-[#f4f4f4] font-['DejaVu_Sans_Mono',monospace] text-[20px] font-bold text-[#bbbbbb]"
                >
                  -
                </button>
              </div>
              <div className="w-[34px] overflow-hidden rounded border-2 border-black/20 bg-white bg-clip-padding">
                <button aria-label="Draw a polygon" className="flex h-[31px] w-full items-center justify-center border-b border-[#cccccc]">
                  <svg width="12" height="12" viewBox="0 0 12 12">
                    <path d="M5.4,0 11.6,4 10.4,10.6 3.4,12 0.2,5.4Z" fill="#464646" />
                  </svg>
                </button>
                <button aria-label="Draw a rectangle" className="flex h-[30px] w-full items-center justify-center">
                  <svg width="10" height="10">
                    <rect width="10" height="10" fill="#464646" />
                  </svg>
                </button>
              </div>
            </div>
            <div className="absolute right-0 bottom-0 bg-white/70 px-[5px] font-['Liberation_Sans',sans-serif] text-[11px] leading-4 text-[#333333]">
              <a href="#leaflet" className="text-[#0078a8]">
                Leaflet
              </a>{" "}
              | © OpenStreetMap
            </div>
          </div>
          <p className="mt-4">
            The map shows sites where the selected species are present. Use the select by bounding box or by polygon tools to
            highlight in the tree which species are present at those selected sites.
          </p>
        </section>

        <section className="min-w-0">
          <Title>Site Based Stat Relationships</Title>
          <div className="flex items-center gap-[6px]">
            <Dropdown id="y-metric" label="Y axis metric" options={["Range Size Per Site"]} className="flex-1" />
            <span>vs</span>
            <Dropdown id="x-metric" label="X axis metric" options={["Alpha Diversity"]} className="flex-1" />
          </div>
          <div className="mt-[14px]">
            <ScatterPlot />
          </div>
          <p className="mt-[17px] max-w-[502px]">
            The scatter plot shows relationships between site based statistics; each dot represents a single site. If sites in
            the map are highlighted, the corresponding sites are highlighted in the same color in the scatter plot. You can
            brush sites in the plot by clicking and dragging to create a selection box. Doing so will highlight the selected
            points as well as those sites on the map and the species present at those sites in the tree. Use the two drop down
            boxes to select the metrics to use for the X and Y axes.
          </p>
        </section>
      </main>
    </div>
  );
}
